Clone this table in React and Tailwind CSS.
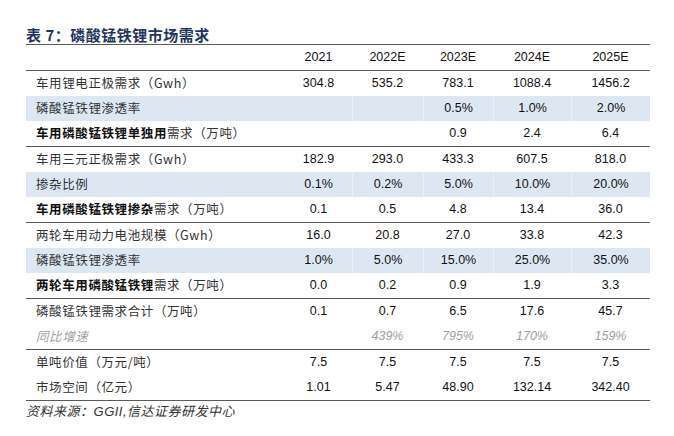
const years = ["2021", "2022E", "2023E", "2024E", "2025E"];

// label: [boldPart, normalPart]
const rows = [
  { label: ["", "车用锂电正极需求（Gwh）"], vals: ["304.8", "535.2", "783.1", "1088.4", "1456.2"] },
  { label: ["", "磷酸锰铁锂渗透率"], vals: ["", "", "0.5%", "1.0%", "2.0%"], blue: true },
  { label: ["车用磷酸锰铁锂单独用", "需求（万吨）"], vals: ["", "", "0.9", "2.4", "6.4"], line: true },
  { label: ["", "车用三元正极需求（Gwh）"], vals: ["182.9", "293.0", "433.3", "607.5", "818.0"] },
  { label: ["", "掺杂比例"], vals: ["0.1%", "0.2%", "5.0%", "10.0%", "20.0%"], blue: true },
  { label: ["车用磷酸锰铁锂掺杂", "需求（万吨）"], vals: ["0.1", "0.5", "4.8", "13.4", "36.0"], line: true },
  { label: ["", "两轮车用动力电池规模（Gwh）"], vals: ["16.0", "20.8", "27.0", "33.8", "42.3"] },
  { label: ["", "磷酸锰铁锂渗透率"], vals: ["1.0%", "5.0%", "15.0%", "25.0%", "35.0%"], blue: true },
  { label: ["两轮车用磷酸锰铁锂", "需求（万吨）"], vals: ["0.0", "0.2", "0.9", "1.9", "3.3"], line: true },
  { label: ["", "磷酸锰铁锂需求合计（万吨）"], vals: ["0.1", "0.7", "6.5", "17.6", "45.7"] },
  { label: ["", "同比增速"], vals: ["", "439%", "795%", "170%", "159%"], gray: true, line: true },
  { label: ["", "单吨价值（万元/吨）"], vals: ["7.5", "7.5", "7.5", "7.5", "7.5"] },
  { label: ["", "市场空间（亿元）"], vals: ["1.01", "5.47", "48.90", "132.14", "342.40"], line: true },
];

const GRID = "grid grid-cols-[259px_67px_71px_70px_78px_79px]";
const CJK = "font-['Noto_Sans_CJK_SC','Liberation_Sans',sans-serif]";
const NUM = "font-['Liberation_Sans',Arial,sans-serif]";

export default function App() {
  return (
    <div className="w-[674px] h-[436px] bg-white pt-[26px] px-[26px]">
      <div className={`h-[18px] leading-[18px] text-[15px] font-bold text-[#1f3560] tracking-[0.5px] ${CJK}`}>
        表 7：磷酸锰铁锂市场需求
      </div>

      <div className="w-[624px] border-t border-[#5a5a5a]">
        {/* header */}
        <div className={`${GRID} h-[26px] items-center border-b border-[#5a5a5a]`}>
          <div />
          {years.map((y) => (
            <div key={y} className={`text-center text-[12.5px] text-[#111] ${NUM}`}>
              {y}
            </div>
          ))}
        </div>

        {rows.map((r, i) => (
          <div
            key={i}
            className={`${GRID} items-stretch ${r.blue ? "bg-[#dce7f2]" : ""} ${
              r.line ? "border-b border-[#5a5a5a] h-[26px]" : "h-[25px]"
            }`}
          >
            <div
              className={`flex items-center pl-[10px] text-[12.5px] tracking-[0.6px] ${CJK} ${
                r.gray ? "italic text-[#a0a0a0]" : "text-[#333]"
              }`}
            >
              {r.label[0] && <span className="font-bold text-[#111]">{r.label[0]}</span>}
              <span>{r.label[1]}</span>
            </div>
            {r.vals.map((v, j) => (
              <div
                key={j}
                className={`flex items-center justify-center text-[12.5px] ${NUM} ${
                  r.gray ? "italic text-[#a0a0a0]" : "text-[#111]"
                } ${r.blue && j > 0 ? "border-l border-[#eaf0f7]" : ""}`}
              >
                {v}
              </div>
            ))}
          </div>
        ))}

        <div className={`h-[20px] leading-[20px] text-[13px] italic text-[#333] tracking-[0.5px] ${CJK}`}>
          资料来源：<span className={NUM}>GGII,</span>信达证券研发中心
        </div>
      </div>
    </div>
  );
}
